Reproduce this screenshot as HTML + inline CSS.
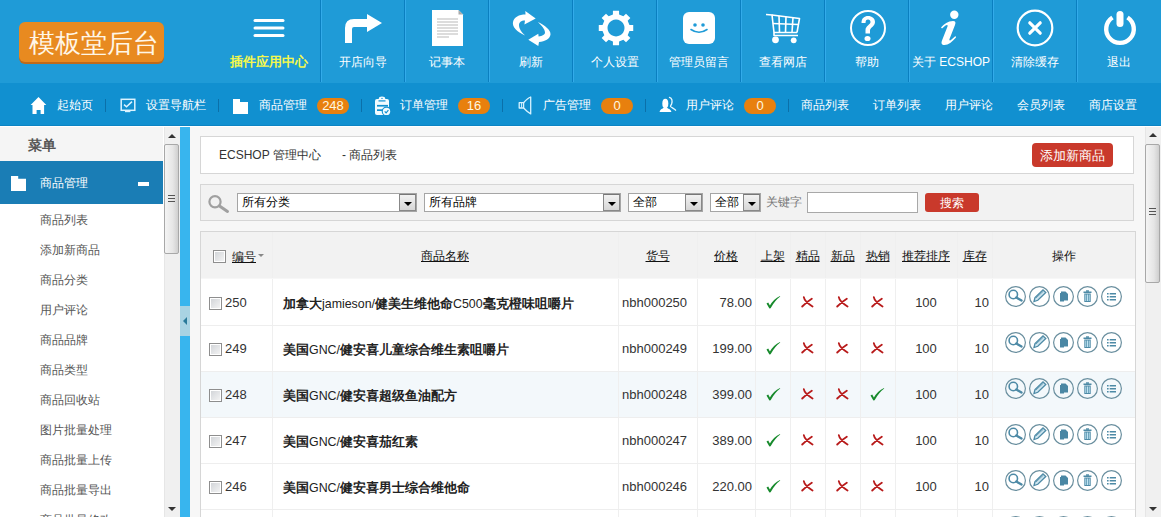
<!DOCTYPE html><html><head><meta charset="utf-8"><style>
*{margin:0;padding:0;box-sizing:border-box}
html,body{width:1161px;height:517px;overflow:hidden;background:#f4f4f4;font-family:"Liberation Sans",sans-serif;font-size:12px;color:#333}
.a{position:absolute}
#hd{position:absolute;left:0;top:0;width:1161px;height:83px;background:#1f9bd7}
#logo{position:absolute;left:19px;top:22px;width:145px;height:40px;background:#e88a20;border-radius:6px;box-shadow:0 2px 0 #bf6a1a;color:#fff6e6;font-size:26.5px;line-height:40px;text-align:center}
.hs{position:absolute;top:0;width:1px;height:82px;background:#0a7fc0}
.hl{position:absolute;top:0;width:1px;height:82px;background:#33abea}
.ht{position:absolute;top:53px;width:84px;text-align:center;color:#fff;font-size:12px;line-height:18px;white-space:nowrap}
#nav{position:absolute;left:0;top:83px;width:1161px;height:43px;background:#1190d0;border-bottom:1px solid #0c84c4}
.n{position:absolute;top:13px;color:#fff;font-size:12px;line-height:18px;white-space:nowrap}
.ns{position:absolute;top:16px;width:1px;height:13px;background:#0b70a9}
.bd{position:absolute;top:15px;width:32px;height:16px;border-radius:8px;background:#e8800e;color:#fff8e0;font-size:13px;line-height:16px;text-align:center}
.side-it{position:absolute;left:40px;color:#555;font-size:12px;line-height:16px;white-space:nowrap}
.th{position:absolute;top:0;height:47px;line-height:49px;text-align:center;color:#111;font-size:12px;font-weight:500;white-space:nowrap}
.th u{text-decoration:underline}
.td{position:absolute;white-space:nowrap;font-size:12px;color:#333}
.cv{position:absolute;top:0;width:1px;background:#efefef}
.rl{position:absolute;left:201px;width:934px;height:1px;background:#eeeeee}
.cb{position:absolute;width:13px;height:13px;border:1px solid #8e8e8e;box-shadow:inset 0 0 0 1px #fff;background:linear-gradient(135deg,#cfd2d6,#f6f6f6)}
.ic{position:absolute;width:21px;height:21px}
.sel{position:absolute;top:193px;height:19px;border:1px solid #a5a5a5;background:#fff;color:#000;font-size:12px;line-height:17px;padding-left:4px;white-space:nowrap}
.sel i{position:absolute;right:0;top:0;width:17px;height:17px;border:1px solid #888;border-top-color:#777;background:linear-gradient(#f2f2f2,#d6d6d6)}
.sel i:after{content:"";position:absolute;left:4px;top:7px;border-left:4px solid transparent;border-right:4px solid transparent;border-top:4px solid #000}
</style></head><body>
<div id="hd">
<div id="logo"></div><div class="a" style="left:21px;top:23px;width:145px;height:40px;color:#fff6e6;font-size:26.3px;font-weight:300;line-height:40px;text-align:center">模板堂后台</div>
<svg class="a" style="left:252px;top:17px" width="34" height="22"><g stroke="#fff" stroke-width="3" stroke-linecap="round"><line x1="3" y1="3.5" x2="31" y2="3.5"/><line x1="3" y1="11" x2="31" y2="11"/><line x1="3" y1="18.5" x2="31" y2="18.5"/></g></svg>
<div class="a" style="left:230px;top:53px;width:80px;color:#f4f84c;font-weight:bold;font-size:13px;line-height:18px;white-space:nowrap">插件应用中心</div>
<div class="hs" style="left:320px"></div><div class="hl" style="left:321px"></div>
<div class="ht" style="left:321px">开店向导</div>
<div class="hs" style="left:404px"></div><div class="hl" style="left:405px"></div>
<div class="ht" style="left:405px">记事本</div>
<div class="hs" style="left:488px"></div><div class="hl" style="left:489px"></div>
<div class="ht" style="left:489px">刷新</div>
<div class="hs" style="left:572px"></div><div class="hl" style="left:573px"></div>
<div class="ht" style="left:573px">个人设置</div>
<div class="hs" style="left:656px"></div><div class="hl" style="left:657px"></div>
<div class="ht" style="left:657px">管理员留言</div>
<div class="hs" style="left:740px"></div><div class="hl" style="left:741px"></div>
<div class="ht" style="left:741px">查看网店</div>
<div class="hs" style="left:824px"></div><div class="hl" style="left:825px"></div>
<div class="ht" style="left:825px">帮助</div>
<div class="hs" style="left:908px"></div><div class="hl" style="left:909px"></div>
<div class="ht" style="left:909px">关于 ECSHOP</div>
<div class="hs" style="left:992px"></div><div class="hl" style="left:993px"></div>
<div class="ht" style="left:993px">清除缓存</div>
<div class="hs" style="left:1076px"></div><div class="hl" style="left:1077px"></div>
<div class="ht" style="left:1077px">退出</div>
<svg class="a" style="left:340px;top:10px" width="48" height="38"><path d="M5 33 L5 18 Q5 9 14 9 L27 9 L27 4 L42 13 L27 22 L27 17 L14 17 Q12 17 12 19 L12 33 Z" fill="#fff"/></svg>
<svg class="a" style="left:432px;top:10px" width="32" height="36"><path d="M0 0 H26.5 L31 4.5 V36 H0 Z" fill="#fff"/><path d="M26.5 0 L31 4.5 H26.5 Z" fill="#a9a9a9"/><g fill="#dcdcdc"><rect x="5" y="8" width="21" height="2"/><rect x="5" y="11" width="21" height="2"/><rect x="5" y="14" width="21" height="2"/><rect x="5" y="17" width="21" height="2"/><rect x="5" y="20" width="21" height="2"/><rect x="5" y="23" width="21" height="2"/><rect x="5" y="26" width="12" height="2"/></g></svg>
<svg class="a" style="left:500px;top:5px" width="60" height="45"><g fill="#fff"><path d="M25 30.5 C17 27 12 22 13 17 C14 12 19 9.5 25.5 9.5 L25.3 6 L35.7 13.5 L24.4 19.6 L25 15.5 C21 15.5 19 17.5 19 20 C19 24 22 27.5 25 30.5 Z"/><path d="M37.9 17 C45 20.5 51 25 50.5 29.5 C50 34 45 36.5 39 37 L38.3 41 L28.3 34.8 L38.3 28.7 L38.6 31.5 C42.5 31 45 29.5 45 27.5 C45 24 41 20 37.9 17 Z"/></g></svg>
<svg class="a" style="left:598px;top:10px" width="36" height="36"><path d="M14.93 4.55 L14.92 0.77 L21.08 0.77 L21.07 4.55 L25.34 6.31 L28.00 3.64 L32.36 8.00 L29.69 10.66 L31.45 14.93 L35.23 14.92 L35.23 21.08 L31.45 21.07 L29.69 25.34 L32.36 28.00 L28.00 32.36 L25.34 29.69 L21.07 31.45 L21.08 35.23 L14.92 35.23 L14.93 31.45 L10.66 29.69 L8.00 32.36 L3.64 28.00 L6.31 25.34 L4.55 21.07 L0.77 21.08 L0.77 14.92 L4.55 14.93 L6.31 10.66 L3.64 8.00 L8.00 3.64 L10.66 6.31 Z M18 9.5 A8.5 8.5 0 1 0 18.01 9.5 Z" fill="#fff" fill-rule="evenodd"/><circle cx="18" cy="18" r="13.9" fill="none"/></svg>
<svg class="a" style="left:683px;top:12px" width="33" height="33"><rect x="0" y="0" width="32" height="32" rx="6" fill="#fff"/><circle cx="12" cy="13" r="1.8" fill="#1f9bd7"/><circle cx="20" cy="13" r="1.8" fill="#1f9bd7"/><path d="M8 17.5 Q16 23 24 17.5" stroke="#1f9bd7" stroke-width="1.6" fill="none" stroke-linecap="round"/></svg>
<svg class="a" style="left:764px;top:12px" width="38" height="34"><g stroke="#fff" stroke-width="1.6" fill="none" stroke-linejoin="round"><path d="M2 2.5 L8 3 L10 20.5 L33 20.5"/><path d="M8 3 L35.5 6.5 L33 20.5"/><line x1="8.8" y1="11.5" x2="34.2" y2="12.5"/><line x1="15" y1="3.8" x2="15.5" y2="20.5"/><line x1="22" y1="4.6" x2="21.5" y2="20.5"/><line x1="29" y1="5.5" x2="28" y2="20.5"/><path d="M10 20.5 L10 23.5 L34 23.5"/></g><circle cx="11.5" cy="27.8" r="3.4" fill="#fff"/><circle cx="29.7" cy="28.3" r="2.9" fill="#fff"/></svg>
<svg class="a" style="left:849px;top:9px" width="38" height="38"><circle cx="19" cy="19" r="17" stroke="#fff" stroke-width="2" fill="none"/><path d="M12.5 14 C12.5 9 15.5 7 19 7 C23 7 26 9.5 26 13 C26 17 22 18 21 21 L21 24.5 L16.5 24.5 L16.5 21 C16.5 17 21.5 15.5 21.5 13 C21.5 11.5 20.5 10.5 19 10.5 C17.5 10.5 16.5 11.5 16.5 14 Z" fill="#fff"/><ellipse cx="18.5" cy="29.5" rx="3" ry="2.6" fill="#fff"/></svg>
<svg class="a" style="left:938px;top:9px" width="24" height="38"><circle cx="16.3" cy="5.7" r="4.2" fill="#fff"/><path d="M3 18.5 C6 15 10 12 15 12 C17.5 12 18 13.5 17 16 L11.5 30 C11 31.5 12 32 13.5 30.5 L17.5 27 L18 28.5 C14 33 10.5 36 6.5 36 C3.5 36 3 34 4 31.5 L9.5 17.5 C10 16 9 15.5 7.5 16.5 L4 19.5 Z" fill="#fff"/></svg>
<svg class="a" style="left:1016px;top:9px" width="38" height="38"><circle cx="19" cy="19" r="17.3" stroke="#fff" stroke-width="2.2" fill="none"/><path d="M13.8 13.8 L24.2 24.2 M24.2 13.8 L13.8 24.2" stroke="#fff" stroke-width="3.2" stroke-linecap="round"/></svg>
<svg class="a" style="left:1102px;top:10px" width="36" height="37"><path d="M10.5 7.5 A13.8 13.8 0 1 0 25.5 7.5" stroke="#fff" stroke-width="4.4" fill="none"/><line x1="18" y1="4.5" x2="18" y2="13.5" stroke="#fff" stroke-width="7" stroke-linecap="round"/></svg>
</div>
<div id="nav">
<svg class="a" style="left:30px;top:13px" width="18" height="19"><path d="M8.5 0.9 L16.3 9 L14.1 9 L14.1 17.9 L10.6 17.9 L10.6 13.9 L6.6 13.9 L6.6 17.9 L2.5 17.9 L2.5 9 L0.6 9 Z" fill="#fff"/></svg>
<div class="n" style="left:57px">起始页</div>
<div class="ns" style="left:105px"></div>
<svg class="a" style="left:120px;top:15px" width="16" height="15"><rect x="1.2" y="1.3" width="13.6" height="11" fill="none" stroke="#dcf3ff" stroke-width="1.5"/><path d="M4 6.6 L6.5 8.8 L12 3.6" stroke="#dcf3ff" stroke-width="1.5" fill="none"/><rect x="5" y="12.6" width="5.4" height="1.6" fill="#dcf3ff"/></svg>
<div class="n" style="left:146px">设置导航栏</div>
<div class="ns" style="left:218px"></div>
<svg class="a" style="left:232px;top:15px" width="17" height="17"><path d="M1 1 H8 V4 H16 V16 H1 Z" fill="#fff"/></svg>
<div class="n" style="left:259px">商品管理</div>
<div class="bd" style="left:317px">248</div>
<div class="ns" style="left:361px"></div>
<svg class="a" style="left:370px;top:11px" width="24" height="24"><rect x="5" y="5" width="14" height="16" rx="2" fill="#f2fbff"/><ellipse cx="12" cy="4.6" rx="3.2" ry="2" fill="#f2fbff"/><circle cx="12" cy="4.4" r="0.7" fill="#1190d0"/><rect x="8.5" y="6.3" width="7" height="1.2" fill="#1190d0"/><rect x="7" y="10.9" width="11" height="1.7" fill="#1190d0"/><rect x="7" y="15.3" width="6" height="1.7" fill="#1190d0"/><circle cx="16.5" cy="17.4" r="4.8" fill="#1190d0"/><circle cx="16.5" cy="17.4" r="3.7" fill="#f2fbff"/><path d="M14.7 17.4 L16.1 18.8 L18.4 16.2" stroke="#1190d0" stroke-width="1.2" fill="none"/></svg>
<div class="n" style="left:400px">订单管理</div>
<div class="bd" style="left:458px">16</div>
<div class="ns" style="left:502px"></div>
<svg class="a" style="left:512px;top:9px" width="28" height="28"><g stroke="#d6f2ff" stroke-width="1.3" fill="none" stroke-linejoin="round"><path d="M7.2 10.7 H11.6 V16 H7.2 Z"/><path d="M9.6 11 V15.7" stroke-width="1"/><path d="M11.6 10.7 C14 8 16 6 18.7 5 V21.9 C16 20.5 14 18.5 11.6 16"/></g></svg>
<div class="n" style="left:543px">广告管理</div>
<div class="bd" style="left:601px">0</div>
<div class="ns" style="left:645px"></div>
<svg class="a" style="left:654px;top:9px" width="28" height="28"><ellipse cx="11.3" cy="11.6" rx="3" ry="4.8" fill="#fff"/><path d="M5.6 19.9 C6 17 9 16.8 10 15.2 L12.6 15.2 C13.6 16.8 17 17 17.4 19.9 Z" fill="#fff"/><path d="M15.5 5.4 C18 6 18.6 9 17.6 12 C17 13.5 16 14 16.6 14.6 C17.6 15.6 20.5 16.6 21.6 18.2" stroke="#e6f8ff" stroke-width="1.3" fill="none" stroke-linecap="round"/></svg>
<div class="n" style="left:686px">用户评论</div>
<div class="bd" style="left:744px">0</div>
<div class="ns" style="left:788px"></div>
<div class="n" style="left:801px">商品列表</div>
<div class="n" style="left:873px">订单列表</div>
<div class="n" style="left:945px">用户评论</div>
<div class="n" style="left:1017px">会员列表</div>
<div class="n" style="left:1089px">商店设置</div>
</div>
<div class="a" style="left:0;top:126px;width:1161px;height:1px;background:#fff"></div>
<div class="a" style="left:0;top:127px;width:164px;height:390px;background:#fff"></div>
<div class="a" style="left:0;top:127px;width:163px;height:34px;background:#f5f5f5;color:#555;font-weight:bold;font-size:14px;line-height:36px;padding-left:28px">菜单</div>
<div class="a" style="left:0;top:161px;width:163px;height:43px;background:#1a7db5"></div>
<svg class="a" style="left:10px;top:176px" width="17" height="16"><path d="M1 0 H8.2 V2.8 H16 V15 H1 Z" fill="#fff"/></svg>
<div class="a" style="left:40px;top:174px;color:#fff;font-size:12px;line-height:18px;white-space:nowrap">商品管理</div>
<div class="a" style="left:138px;top:182px;width:11px;height:4px;background:#fff"></div>
<div class="side-it" style="top:212px">商品列表</div>
<div class="side-it" style="top:242px">添加新商品</div>
<div class="side-it" style="top:272px">商品分类</div>
<div class="side-it" style="top:302px">用户评论</div>
<div class="side-it" style="top:332px">商品品牌</div>
<div class="side-it" style="top:362px">商品类型</div>
<div class="side-it" style="top:392px">商品回收站</div>
<div class="side-it" style="top:422px">图片批量处理</div>
<div class="side-it" style="top:452px">商品批量上传</div>
<div class="side-it" style="top:482px">商品批量导出</div>
<div class="side-it" style="top:512px">商品批量修改</div>
<div class="a" style="left:164px;top:127px;width:16px;height:390px;background:#f0f0f0;border-left:1px solid #e6e6e6"></div>
<div class="a" style="left:168px;top:134px;width:0;height:0;border-left:4px solid transparent;border-right:4px solid transparent;border-bottom:4px solid #333"></div>
<div class="a" style="left:164px;top:144px;width:15px;height:110px;border:1px solid #a8a8a8;border-radius:2px;background:linear-gradient(90deg,#f4f4f4,#e6e6e6 60%,#cfcfcf)"></div>
<div class="a" style="left:168px;top:195px;width:7px;height:7px;background:repeating-linear-gradient(#555 0 1px,transparent 1px 3px)"></div>
<div class="a" style="left:168px;top:507px;width:0;height:0;border-left:4px solid transparent;border-right:4px solid transparent;border-top:4px solid #333"></div>
<div class="a" style="left:180px;top:127px;width:10px;height:390px;background:#38b5ee"></div>
<div class="a" style="left:180px;top:306px;width:10px;height:30px;background:#a9d3e3"></div>
<div class="a" style="left:183px;top:317px;width:0;height:0;border-top:4px solid transparent;border-bottom:4px solid transparent;border-right:4px solid #2a7a9a"></div>
<div class="a" style="left:190px;top:127px;width:955px;height:390px;background:#f7f7f7"></div>
<div class="a" style="left:200px;top:136px;width:934px;height:38px;background:#fff;border:1px solid #d6d6d6"></div>
<div class="td" style="left:219px;top:147px;color:#333;line-height:16px">ECSHOP 管理中心</div>
<div class="td" style="left:342px;top:147px;color:#333;line-height:16px">- 商品列表</div>
<div class="a" style="left:1032px;top:143px;width:81px;height:24px;background:#c9392b;border-radius:4px;color:#fff;font-size:13px;line-height:26px;text-align:center;white-space:nowrap">添加新商品</div>
<div class="a" style="left:200px;top:184px;width:934px;height:37px;background:#f2f2f2;border:1px solid #d6d6d6"></div>
<svg class="a" style="left:207px;top:194px" width="24" height="20"><circle cx="8" cy="7.8" r="5.6" stroke="#a0a0a0" stroke-width="2.2" fill="none"/><line x1="12.5" y1="12" x2="20.5" y2="17.5" stroke="#a0a0a0" stroke-width="3" stroke-linecap="round"/></svg>
<div class="sel" style="left:237px;width:180px">所有分类<i></i></div>
<div class="sel" style="left:424px;width:197px">所有品牌<i></i></div>
<div class="sel" style="left:628px;width:75px">全部<i></i></div>
<div class="sel" style="left:710px;width:51px">全部<i></i></div>
<div class="td" style="left:766px;top:194px;color:#777;line-height:16px">关键字</div>
<div class="a" style="left:807px;top:192px;width:111px;height:21px;background:#fff;border:1px solid #a8a8a8"></div>
<div class="a" style="left:925px;top:193px;width:54px;height:19px;background:#c9392b;border-radius:3px;color:#fff;font-size:12px;line-height:21px;text-align:center">搜索</div>
<div class="a" style="left:200px;top:231px;width:936px;height:300px;background:#fff;border:1px solid #d6d6d6"></div>
<div class="a" style="left:201px;top:232px;width:934px;height:46px;background:#f2f2f2"></div>
<div class="a" style="left:201px;top:372px;width:934px;height:45px;background:#f3f8fb"></div>
<div class="cv" style="left:272px;top:232px;height:300px"></div>
<div class="cv" style="left:618px;top:232px;height:300px"></div>
<div class="cv" style="left:697px;top:232px;height:300px"></div>
<div class="cv" style="left:755px;top:232px;height:300px"></div>
<div class="cv" style="left:790px;top:232px;height:300px"></div>
<div class="cv" style="left:825px;top:232px;height:300px"></div>
<div class="cv" style="left:860px;top:232px;height:300px"></div>
<div class="cv" style="left:895px;top:232px;height:300px"></div>
<div class="cv" style="left:957px;top:232px;height:300px"></div>
<div class="cv" style="left:992px;top:232px;height:300px"></div>
<div class="rl" style="top:325px"></div>
<div class="rl" style="top:371px"></div>
<div class="rl" style="top:417px"></div>
<div class="rl" style="top:463px"></div>
<div class="rl" style="top:509px"></div>
<div class="rl" style="top:555px"></div>
<div class="rl" style="top:278px;background:#f7f7f7"></div>
<div class="cb" style="left:213px;top:250px"></div>
<div class="a" style="left:232px;top:249px;color:#111;font-size:12px;font-weight:500;line-height:16px"><u>编号</u></div>
<div class="a" style="left:258px;top:254px;width:0;height:0;border-left:3px solid transparent;border-right:3px solid transparent;border-top:3px solid #888"></div>
<div class="th" style="left:272px;width:346px;top:232px"><u>商品名称</u></div>
<div class="th" style="left:618px;width:79px;top:232px"><u>货号</u></div>
<div class="th" style="left:697px;width:58px;top:232px"><u>价格</u></div>
<div class="th" style="left:755px;width:35px;top:232px"><u>上架</u></div>
<div class="th" style="left:790px;width:35px;top:232px"><u>精品</u></div>
<div class="th" style="left:825px;width:35px;top:232px"><u>新品</u></div>
<div class="th" style="left:860px;width:35px;top:232px"><u>热销</u></div>
<div class="th" style="left:895px;width:62px;top:232px"><u>推荐排序</u></div>
<div class="th" style="left:957px;width:35px;top:232px"><u>库存</u></div>
<div class="th" style="left:992px;width:143px;top:232px">操作</div>
<div class="cb" style="left:209px;top:297px"></div>
<div class="td" style="left:225px;top:294px;line-height:17px;font-size:13px">250</div>
<div class="td" style="left:283px;top:296px;line-height:16px;font-weight:bold;font-size:13px;color:#222">加拿大<span style="font-weight:normal;font-size:12.4px;position:relative;top:-0.5px">jamieson/</span>健美生维他命<span style="font-weight:normal;font-size:12.4px;position:relative;top:-0.5px">C500</span>毫克橙味咀嚼片</div>
<div class="td" style="left:622px;top:294px;line-height:17px;font-size:13px">nbh000250</div>
<div class="td" style="left:697px;width:55px;text-align:right;top:294px;line-height:17px;font-size:13px">78.00</div>
<div class="a" style="left:766px;top:295px;width:15px;height:14px"><svg width="15" height="14"><path d="M0.5 8.5 L2.2 7.6 L3.9 10.6 Q7.5 4 14 1 L14.2 1.6 Q9 5.5 4.6 13.2 L3.4 13.6 Z" fill="#178a2c"/></svg></div>
<div class="a" style="left:801px;top:296px;width:13px;height:12px"><svg width="13" height="12"><path d="M2.8 1.2 Q3.5 5.5 11.5 10.5 M10.8 2.8 Q6 5.8 1.2 10.5" stroke="#b81a1a" stroke-width="1.8" fill="none" stroke-linecap="round"/></svg></div>
<div class="a" style="left:836px;top:296px;width:13px;height:12px"><svg width="13" height="12"><path d="M2.8 1.2 Q3.5 5.5 11.5 10.5 M10.8 2.8 Q6 5.8 1.2 10.5" stroke="#b81a1a" stroke-width="1.8" fill="none" stroke-linecap="round"/></svg></div>
<div class="a" style="left:871px;top:296px;width:13px;height:12px"><svg width="13" height="12"><path d="M2.8 1.2 Q3.5 5.5 11.5 10.5 M10.8 2.8 Q6 5.8 1.2 10.5" stroke="#b81a1a" stroke-width="1.8" fill="none" stroke-linecap="round"/></svg></div>
<div class="td" style="left:895px;width:62px;text-align:center;top:294px;line-height:17px;font-size:13px">100</div>
<div class="td" style="left:957px;width:32px;text-align:right;top:294px;line-height:17px;font-size:13px">10</div>
<svg class="a" style="left:1005px;top:286px" width="22" height="22"><circle cx="10.5" cy="10.5" r="9.9" stroke="#6a8f9f" stroke-width="1.2" fill="none"/><circle cx="8.3" cy="8.5" r="4.2" stroke="#4d8aa6" stroke-width="1.6" fill="none"/><line x1="11.3" y1="11.5" x2="16.5" y2="14.5" stroke="#4d8aa6" stroke-width="2.4" stroke-linecap="round"/></svg>
<svg class="a" style="left:1029px;top:286px" width="22" height="22"><circle cx="10.5" cy="10.5" r="9.9" stroke="#6a8f9f" stroke-width="1.2" fill="none"/><path d="M5 15.5 L6 11.5 L14 3.8 L16.8 6.5 L8.8 14.3 Z" fill="#cfe6f0" stroke="#4d8aa6" stroke-width="1.3"/><line x1="7" y1="12" x2="14.5" y2="5" stroke="#4d8aa6" stroke-width="0.8"/></svg>
<svg class="a" style="left:1053px;top:286px" width="22" height="22"><circle cx="10.5" cy="10.5" r="9.9" stroke="#6a8f9f" stroke-width="1.2" fill="none"/><path d="M8 5.5 H12.5 L15 8 V14.5 H8 Z" fill="#4a87a4"/><path d="M7 7 H11 V15.5 H7 Z" fill="#4a87a4"/></svg>
<svg class="a" style="left:1077px;top:286px" width="22" height="22"><circle cx="10.5" cy="10.5" r="9.9" stroke="#6a8f9f" stroke-width="1.2" fill="none"/><rect x="6.5" y="5.5" width="8" height="1.5" fill="#4d8aa6"/><rect x="9" y="4.3" width="3" height="1.5" fill="#4d8aa6"/><path d="M7.3 7.5 H13.7 V16 H7.3 Z" fill="#4d8aa6"/><g fill="#bfe3f2"><rect x="8.3" y="8.5" width="1" height="6.5"/><rect x="10" y="8.5" width="1" height="6.5"/><rect x="11.7" y="8.5" width="1" height="6.5"/></g></svg>
<svg class="a" style="left:1101px;top:286px" width="22" height="22"><circle cx="10.5" cy="10.5" r="9.9" stroke="#6a8f9f" stroke-width="1.2" fill="none"/><g fill="#4d8aa6"><rect x="6" y="7" width="1.6" height="1.5"/><rect x="6" y="10" width="1.6" height="1.5"/><rect x="6" y="13" width="1.6" height="1.5"/><rect x="8.7" y="7" width="6.3" height="1.5"/><rect x="8.7" y="10" width="6.3" height="1.5"/><rect x="8.7" y="13" width="6.3" height="1.5"/></g></svg>
<div class="cb" style="left:209px;top:343px"></div>
<div class="td" style="left:225px;top:340px;line-height:17px;font-size:13px">249</div>
<div class="td" style="left:283px;top:342px;line-height:16px;font-weight:bold;font-size:13px;color:#222">美国<span style="font-weight:normal;font-size:12.4px;position:relative;top:-0.5px">GNC/</span>健安喜儿童综合维生素咀嚼片</div>
<div class="td" style="left:622px;top:340px;line-height:17px;font-size:13px">nbh000249</div>
<div class="td" style="left:697px;width:55px;text-align:right;top:340px;line-height:17px;font-size:13px">199.00</div>
<div class="a" style="left:766px;top:341px;width:15px;height:14px"><svg width="15" height="14"><path d="M0.5 8.5 L2.2 7.6 L3.9 10.6 Q7.5 4 14 1 L14.2 1.6 Q9 5.5 4.6 13.2 L3.4 13.6 Z" fill="#178a2c"/></svg></div>
<div class="a" style="left:801px;top:342px;width:13px;height:12px"><svg width="13" height="12"><path d="M2.8 1.2 Q3.5 5.5 11.5 10.5 M10.8 2.8 Q6 5.8 1.2 10.5" stroke="#b81a1a" stroke-width="1.8" fill="none" stroke-linecap="round"/></svg></div>
<div class="a" style="left:836px;top:342px;width:13px;height:12px"><svg width="13" height="12"><path d="M2.8 1.2 Q3.5 5.5 11.5 10.5 M10.8 2.8 Q6 5.8 1.2 10.5" stroke="#b81a1a" stroke-width="1.8" fill="none" stroke-linecap="round"/></svg></div>
<div class="a" style="left:871px;top:342px;width:13px;height:12px"><svg width="13" height="12"><path d="M2.8 1.2 Q3.5 5.5 11.5 10.5 M10.8 2.8 Q6 5.8 1.2 10.5" stroke="#b81a1a" stroke-width="1.8" fill="none" stroke-linecap="round"/></svg></div>
<div class="td" style="left:895px;width:62px;text-align:center;top:340px;line-height:17px;font-size:13px">100</div>
<div class="td" style="left:957px;width:32px;text-align:right;top:340px;line-height:17px;font-size:13px">10</div>
<svg class="a" style="left:1005px;top:332px" width="22" height="22"><circle cx="10.5" cy="10.5" r="9.9" stroke="#6a8f9f" stroke-width="1.2" fill="none"/><circle cx="8.3" cy="8.5" r="4.2" stroke="#4d8aa6" stroke-width="1.6" fill="none"/><line x1="11.3" y1="11.5" x2="16.5" y2="14.5" stroke="#4d8aa6" stroke-width="2.4" stroke-linecap="round"/></svg>
<svg class="a" style="left:1029px;top:332px" width="22" height="22"><circle cx="10.5" cy="10.5" r="9.9" stroke="#6a8f9f" stroke-width="1.2" fill="none"/><path d="M5 15.5 L6 11.5 L14 3.8 L16.8 6.5 L8.8 14.3 Z" fill="#cfe6f0" stroke="#4d8aa6" stroke-width="1.3"/><line x1="7" y1="12" x2="14.5" y2="5" stroke="#4d8aa6" stroke-width="0.8"/></svg>
<svg class="a" style="left:1053px;top:332px" width="22" height="22"><circle cx="10.5" cy="10.5" r="9.9" stroke="#6a8f9f" stroke-width="1.2" fill="none"/><path d="M8 5.5 H12.5 L15 8 V14.5 H8 Z" fill="#4a87a4"/><path d="M7 7 H11 V15.5 H7 Z" fill="#4a87a4"/></svg>
<svg class="a" style="left:1077px;top:332px" width="22" height="22"><circle cx="10.5" cy="10.5" r="9.9" stroke="#6a8f9f" stroke-width="1.2" fill="none"/><rect x="6.5" y="5.5" width="8" height="1.5" fill="#4d8aa6"/><rect x="9" y="4.3" width="3" height="1.5" fill="#4d8aa6"/><path d="M7.3 7.5 H13.7 V16 H7.3 Z" fill="#4d8aa6"/><g fill="#bfe3f2"><rect x="8.3" y="8.5" width="1" height="6.5"/><rect x="10" y="8.5" width="1" height="6.5"/><rect x="11.7" y="8.5" width="1" height="6.5"/></g></svg>
<svg class="a" style="left:1101px;top:332px" width="22" height="22"><circle cx="10.5" cy="10.5" r="9.9" stroke="#6a8f9f" stroke-width="1.2" fill="none"/><g fill="#4d8aa6"><rect x="6" y="7" width="1.6" height="1.5"/><rect x="6" y="10" width="1.6" height="1.5"/><rect x="6" y="13" width="1.6" height="1.5"/><rect x="8.7" y="7" width="6.3" height="1.5"/><rect x="8.7" y="10" width="6.3" height="1.5"/><rect x="8.7" y="13" width="6.3" height="1.5"/></g></svg>
<div class="cb" style="left:209px;top:389px"></div>
<div class="td" style="left:225px;top:386px;line-height:17px;font-size:13px">248</div>
<div class="td" style="left:283px;top:388px;line-height:16px;font-weight:bold;font-size:13px;color:#222">美国<span style="font-weight:normal;font-size:12.4px;position:relative;top:-0.5px">GNC/</span>健安喜超级鱼油配方</div>
<div class="td" style="left:622px;top:386px;line-height:17px;font-size:13px">nbh000248</div>
<div class="td" style="left:697px;width:55px;text-align:right;top:386px;line-height:17px;font-size:13px">399.00</div>
<div class="a" style="left:766px;top:387px;width:15px;height:14px"><svg width="15" height="14"><path d="M0.5 8.5 L2.2 7.6 L3.9 10.6 Q7.5 4 14 1 L14.2 1.6 Q9 5.5 4.6 13.2 L3.4 13.6 Z" fill="#178a2c"/></svg></div>
<div class="a" style="left:801px;top:388px;width:13px;height:12px"><svg width="13" height="12"><path d="M2.8 1.2 Q3.5 5.5 11.5 10.5 M10.8 2.8 Q6 5.8 1.2 10.5" stroke="#b81a1a" stroke-width="1.8" fill="none" stroke-linecap="round"/></svg></div>
<div class="a" style="left:836px;top:388px;width:13px;height:12px"><svg width="13" height="12"><path d="M2.8 1.2 Q3.5 5.5 11.5 10.5 M10.8 2.8 Q6 5.8 1.2 10.5" stroke="#b81a1a" stroke-width="1.8" fill="none" stroke-linecap="round"/></svg></div>
<div class="a" style="left:870px;top:387px;width:15px;height:14px"><svg width="15" height="14"><path d="M0.5 8.5 L2.2 7.6 L3.9 10.6 Q7.5 4 14 1 L14.2 1.6 Q9 5.5 4.6 13.2 L3.4 13.6 Z" fill="#178a2c"/></svg></div>
<div class="td" style="left:895px;width:62px;text-align:center;top:386px;line-height:17px;font-size:13px">100</div>
<div class="td" style="left:957px;width:32px;text-align:right;top:386px;line-height:17px;font-size:13px">10</div>
<svg class="a" style="left:1005px;top:378px" width="22" height="22"><circle cx="10.5" cy="10.5" r="9.9" stroke="#6a8f9f" stroke-width="1.2" fill="none"/><circle cx="8.3" cy="8.5" r="4.2" stroke="#4d8aa6" stroke-width="1.6" fill="none"/><line x1="11.3" y1="11.5" x2="16.5" y2="14.5" stroke="#4d8aa6" stroke-width="2.4" stroke-linecap="round"/></svg>
<svg class="a" style="left:1029px;top:378px" width="22" height="22"><circle cx="10.5" cy="10.5" r="9.9" stroke="#6a8f9f" stroke-width="1.2" fill="none"/><path d="M5 15.5 L6 11.5 L14 3.8 L16.8 6.5 L8.8 14.3 Z" fill="#cfe6f0" stroke="#4d8aa6" stroke-width="1.3"/><line x1="7" y1="12" x2="14.5" y2="5" stroke="#4d8aa6" stroke-width="0.8"/></svg>
<svg class="a" style="left:1053px;top:378px" width="22" height="22"><circle cx="10.5" cy="10.5" r="9.9" stroke="#6a8f9f" stroke-width="1.2" fill="none"/><path d="M8 5.5 H12.5 L15 8 V14.5 H8 Z" fill="#4a87a4"/><path d="M7 7 H11 V15.5 H7 Z" fill="#4a87a4"/></svg>
<svg class="a" style="left:1077px;top:378px" width="22" height="22"><circle cx="10.5" cy="10.5" r="9.9" stroke="#6a8f9f" stroke-width="1.2" fill="none"/><rect x="6.5" y="5.5" width="8" height="1.5" fill="#4d8aa6"/><rect x="9" y="4.3" width="3" height="1.5" fill="#4d8aa6"/><path d="M7.3 7.5 H13.7 V16 H7.3 Z" fill="#4d8aa6"/><g fill="#bfe3f2"><rect x="8.3" y="8.5" width="1" height="6.5"/><rect x="10" y="8.5" width="1" height="6.5"/><rect x="11.7" y="8.5" width="1" height="6.5"/></g></svg>
<svg class="a" style="left:1101px;top:378px" width="22" height="22"><circle cx="10.5" cy="10.5" r="9.9" stroke="#6a8f9f" stroke-width="1.2" fill="none"/><g fill="#4d8aa6"><rect x="6" y="7" width="1.6" height="1.5"/><rect x="6" y="10" width="1.6" height="1.5"/><rect x="6" y="13" width="1.6" height="1.5"/><rect x="8.7" y="7" width="6.3" height="1.5"/><rect x="8.7" y="10" width="6.3" height="1.5"/><rect x="8.7" y="13" width="6.3" height="1.5"/></g></svg>
<div class="cb" style="left:209px;top:435px"></div>
<div class="td" style="left:225px;top:432px;line-height:17px;font-size:13px">247</div>
<div class="td" style="left:283px;top:434px;line-height:16px;font-weight:bold;font-size:13px;color:#222">美国<span style="font-weight:normal;font-size:12.4px;position:relative;top:-0.5px">GNC/</span>健安喜茄红素</div>
<div class="td" style="left:622px;top:432px;line-height:17px;font-size:13px">nbh000247</div>
<div class="td" style="left:697px;width:55px;text-align:right;top:432px;line-height:17px;font-size:13px">389.00</div>
<div class="a" style="left:766px;top:433px;width:15px;height:14px"><svg width="15" height="14"><path d="M0.5 8.5 L2.2 7.6 L3.9 10.6 Q7.5 4 14 1 L14.2 1.6 Q9 5.5 4.6 13.2 L3.4 13.6 Z" fill="#178a2c"/></svg></div>
<div class="a" style="left:801px;top:434px;width:13px;height:12px"><svg width="13" height="12"><path d="M2.8 1.2 Q3.5 5.5 11.5 10.5 M10.8 2.8 Q6 5.8 1.2 10.5" stroke="#b81a1a" stroke-width="1.8" fill="none" stroke-linecap="round"/></svg></div>
<div class="a" style="left:836px;top:434px;width:13px;height:12px"><svg width="13" height="12"><path d="M2.8 1.2 Q3.5 5.5 11.5 10.5 M10.8 2.8 Q6 5.8 1.2 10.5" stroke="#b81a1a" stroke-width="1.8" fill="none" stroke-linecap="round"/></svg></div>
<div class="a" style="left:871px;top:434px;width:13px;height:12px"><svg width="13" height="12"><path d="M2.8 1.2 Q3.5 5.5 11.5 10.5 M10.8 2.8 Q6 5.8 1.2 10.5" stroke="#b81a1a" stroke-width="1.8" fill="none" stroke-linecap="round"/></svg></div>
<div class="td" style="left:895px;width:62px;text-align:center;top:432px;line-height:17px;font-size:13px">100</div>
<div class="td" style="left:957px;width:32px;text-align:right;top:432px;line-height:17px;font-size:13px">10</div>
<svg class="a" style="left:1005px;top:424px" width="22" height="22"><circle cx="10.5" cy="10.5" r="9.9" stroke="#6a8f9f" stroke-width="1.2" fill="none"/><circle cx="8.3" cy="8.5" r="4.2" stroke="#4d8aa6" stroke-width="1.6" fill="none"/><line x1="11.3" y1="11.5" x2="16.5" y2="14.5" stroke="#4d8aa6" stroke-width="2.4" stroke-linecap="round"/></svg>
<svg class="a" style="left:1029px;top:424px" width="22" height="22"><circle cx="10.5" cy="10.5" r="9.9" stroke="#6a8f9f" stroke-width="1.2" fill="none"/><path d="M5 15.5 L6 11.5 L14 3.8 L16.8 6.5 L8.8 14.3 Z" fill="#cfe6f0" stroke="#4d8aa6" stroke-width="1.3"/><line x1="7" y1="12" x2="14.5" y2="5" stroke="#4d8aa6" stroke-width="0.8"/></svg>
<svg class="a" style="left:1053px;top:424px" width="22" height="22"><circle cx="10.5" cy="10.5" r="9.9" stroke="#6a8f9f" stroke-width="1.2" fill="none"/><path d="M8 5.5 H12.5 L15 8 V14.5 H8 Z" fill="#4a87a4"/><path d="M7 7 H11 V15.5 H7 Z" fill="#4a87a4"/></svg>
<svg class="a" style="left:1077px;top:424px" width="22" height="22"><circle cx="10.5" cy="10.5" r="9.9" stroke="#6a8f9f" stroke-width="1.2" fill="none"/><rect x="6.5" y="5.5" width="8" height="1.5" fill="#4d8aa6"/><rect x="9" y="4.3" width="3" height="1.5" fill="#4d8aa6"/><path d="M7.3 7.5 H13.7 V16 H7.3 Z" fill="#4d8aa6"/><g fill="#bfe3f2"><rect x="8.3" y="8.5" width="1" height="6.5"/><rect x="10" y="8.5" width="1" height="6.5"/><rect x="11.7" y="8.5" width="1" height="6.5"/></g></svg>
<svg class="a" style="left:1101px;top:424px" width="22" height="22"><circle cx="10.5" cy="10.5" r="9.9" stroke="#6a8f9f" stroke-width="1.2" fill="none"/><g fill="#4d8aa6"><rect x="6" y="7" width="1.6" height="1.5"/><rect x="6" y="10" width="1.6" height="1.5"/><rect x="6" y="13" width="1.6" height="1.5"/><rect x="8.7" y="7" width="6.3" height="1.5"/><rect x="8.7" y="10" width="6.3" height="1.5"/><rect x="8.7" y="13" width="6.3" height="1.5"/></g></svg>
<div class="cb" style="left:209px;top:481px"></div>
<div class="td" style="left:225px;top:478px;line-height:17px;font-size:13px">246</div>
<div class="td" style="left:283px;top:480px;line-height:16px;font-weight:bold;font-size:13px;color:#222">美国<span style="font-weight:normal;font-size:12.4px;position:relative;top:-0.5px">GNC/</span>健安喜男士综合维他命</div>
<div class="td" style="left:622px;top:478px;line-height:17px;font-size:13px">nbh000246</div>
<div class="td" style="left:697px;width:55px;text-align:right;top:478px;line-height:17px;font-size:13px">220.00</div>
<div class="a" style="left:766px;top:479px;width:15px;height:14px"><svg width="15" height="14"><path d="M0.5 8.5 L2.2 7.6 L3.9 10.6 Q7.5 4 14 1 L14.2 1.6 Q9 5.5 4.6 13.2 L3.4 13.6 Z" fill="#178a2c"/></svg></div>
<div class="a" style="left:801px;top:480px;width:13px;height:12px"><svg width="13" height="12"><path d="M2.8 1.2 Q3.5 5.5 11.5 10.5 M10.8 2.8 Q6 5.8 1.2 10.5" stroke="#b81a1a" stroke-width="1.8" fill="none" stroke-linecap="round"/></svg></div>
<div class="a" style="left:836px;top:480px;width:13px;height:12px"><svg width="13" height="12"><path d="M2.8 1.2 Q3.5 5.5 11.5 10.5 M10.8 2.8 Q6 5.8 1.2 10.5" stroke="#b81a1a" stroke-width="1.8" fill="none" stroke-linecap="round"/></svg></div>
<div class="a" style="left:871px;top:480px;width:13px;height:12px"><svg width="13" height="12"><path d="M2.8 1.2 Q3.5 5.5 11.5 10.5 M10.8 2.8 Q6 5.8 1.2 10.5" stroke="#b81a1a" stroke-width="1.8" fill="none" stroke-linecap="round"/></svg></div>
<div class="td" style="left:895px;width:62px;text-align:center;top:478px;line-height:17px;font-size:13px">100</div>
<div class="td" style="left:957px;width:32px;text-align:right;top:478px;line-height:17px;font-size:13px">10</div>
<svg class="a" style="left:1005px;top:470px" width="22" height="22"><circle cx="10.5" cy="10.5" r="9.9" stroke="#6a8f9f" stroke-width="1.2" fill="none"/><circle cx="8.3" cy="8.5" r="4.2" stroke="#4d8aa6" stroke-width="1.6" fill="none"/><line x1="11.3" y1="11.5" x2="16.5" y2="14.5" stroke="#4d8aa6" stroke-width="2.4" stroke-linecap="round"/></svg>
<svg class="a" style="left:1029px;top:470px" width="22" height="22"><circle cx="10.5" cy="10.5" r="9.9" stroke="#6a8f9f" stroke-width="1.2" fill="none"/><path d="M5 15.5 L6 11.5 L14 3.8 L16.8 6.5 L8.8 14.3 Z" fill="#cfe6f0" stroke="#4d8aa6" stroke-width="1.3"/><line x1="7" y1="12" x2="14.5" y2="5" stroke="#4d8aa6" stroke-width="0.8"/></svg>
<svg class="a" style="left:1053px;top:470px" width="22" height="22"><circle cx="10.5" cy="10.5" r="9.9" stroke="#6a8f9f" stroke-width="1.2" fill="none"/><path d="M8 5.5 H12.5 L15 8 V14.5 H8 Z" fill="#4a87a4"/><path d="M7 7 H11 V15.5 H7 Z" fill="#4a87a4"/></svg>
<svg class="a" style="left:1077px;top:470px" width="22" height="22"><circle cx="10.5" cy="10.5" r="9.9" stroke="#6a8f9f" stroke-width="1.2" fill="none"/><rect x="6.5" y="5.5" width="8" height="1.5" fill="#4d8aa6"/><rect x="9" y="4.3" width="3" height="1.5" fill="#4d8aa6"/><path d="M7.3 7.5 H13.7 V16 H7.3 Z" fill="#4d8aa6"/><g fill="#bfe3f2"><rect x="8.3" y="8.5" width="1" height="6.5"/><rect x="10" y="8.5" width="1" height="6.5"/><rect x="11.7" y="8.5" width="1" height="6.5"/></g></svg>
<svg class="a" style="left:1101px;top:470px" width="22" height="22"><circle cx="10.5" cy="10.5" r="9.9" stroke="#6a8f9f" stroke-width="1.2" fill="none"/><g fill="#4d8aa6"><rect x="6" y="7" width="1.6" height="1.5"/><rect x="6" y="10" width="1.6" height="1.5"/><rect x="6" y="13" width="1.6" height="1.5"/><rect x="8.7" y="7" width="6.3" height="1.5"/><rect x="8.7" y="10" width="6.3" height="1.5"/><rect x="8.7" y="13" width="6.3" height="1.5"/></g></svg>
<div class="cb" style="left:209px;top:527px"></div>
<div class="td" style="left:225px;top:524px;line-height:17px;font-size:13px">245</div>
<div class="td" style="left:283px;top:526px;line-height:16px;font-weight:bold;font-size:13px;color:#222">美国<span style="font-weight:normal;font-size:12.4px;position:relative;top:-0.5px">GNC/</span>健安喜女士综合维他命</div>
<div class="td" style="left:622px;top:524px;line-height:17px;font-size:13px">nbh000245</div>
<div class="td" style="left:697px;width:55px;text-align:right;top:524px;line-height:17px;font-size:13px">220.00</div>
<div class="a" style="left:766px;top:525px;width:15px;height:14px"><svg width="15" height="14"><path d="M0.5 8.5 L2.2 7.6 L3.9 10.6 Q7.5 4 14 1 L14.2 1.6 Q9 5.5 4.6 13.2 L3.4 13.6 Z" fill="#178a2c"/></svg></div>
<div class="a" style="left:801px;top:526px;width:13px;height:12px"><svg width="13" height="12"><path d="M2.8 1.2 Q3.5 5.5 11.5 10.5 M10.8 2.8 Q6 5.8 1.2 10.5" stroke="#b81a1a" stroke-width="1.8" fill="none" stroke-linecap="round"/></svg></div>
<div class="a" style="left:836px;top:526px;width:13px;height:12px"><svg width="13" height="12"><path d="M2.8 1.2 Q3.5 5.5 11.5 10.5 M10.8 2.8 Q6 5.8 1.2 10.5" stroke="#b81a1a" stroke-width="1.8" fill="none" stroke-linecap="round"/></svg></div>
<div class="a" style="left:871px;top:526px;width:13px;height:12px"><svg width="13" height="12"><path d="M2.8 1.2 Q3.5 5.5 11.5 10.5 M10.8 2.8 Q6 5.8 1.2 10.5" stroke="#b81a1a" stroke-width="1.8" fill="none" stroke-linecap="round"/></svg></div>
<div class="td" style="left:895px;width:62px;text-align:center;top:524px;line-height:17px;font-size:13px">100</div>
<div class="td" style="left:957px;width:32px;text-align:right;top:524px;line-height:17px;font-size:13px">10</div>
<svg class="a" style="left:1005px;top:516px" width="22" height="22"><circle cx="10.5" cy="10.5" r="9.9" stroke="#6a8f9f" stroke-width="1.2" fill="none"/><circle cx="8.3" cy="8.5" r="4.2" stroke="#4d8aa6" stroke-width="1.6" fill="none"/><line x1="11.3" y1="11.5" x2="16.5" y2="14.5" stroke="#4d8aa6" stroke-width="2.4" stroke-linecap="round"/></svg>
<svg class="a" style="left:1029px;top:516px" width="22" height="22"><circle cx="10.5" cy="10.5" r="9.9" stroke="#6a8f9f" stroke-width="1.2" fill="none"/><path d="M5 15.5 L6 11.5 L14 3.8 L16.8 6.5 L8.8 14.3 Z" fill="#cfe6f0" stroke="#4d8aa6" stroke-width="1.3"/><line x1="7" y1="12" x2="14.5" y2="5" stroke="#4d8aa6" stroke-width="0.8"/></svg>
<svg class="a" style="left:1053px;top:516px" width="22" height="22"><circle cx="10.5" cy="10.5" r="9.9" stroke="#6a8f9f" stroke-width="1.2" fill="none"/><path d="M8 5.5 H12.5 L15 8 V14.5 H8 Z" fill="#4a87a4"/><path d="M7 7 H11 V15.5 H7 Z" fill="#4a87a4"/></svg>
<svg class="a" style="left:1077px;top:516px" width="22" height="22"><circle cx="10.5" cy="10.5" r="9.9" stroke="#6a8f9f" stroke-width="1.2" fill="none"/><rect x="6.5" y="5.5" width="8" height="1.5" fill="#4d8aa6"/><rect x="9" y="4.3" width="3" height="1.5" fill="#4d8aa6"/><path d="M7.3 7.5 H13.7 V16 H7.3 Z" fill="#4d8aa6"/><g fill="#bfe3f2"><rect x="8.3" y="8.5" width="1" height="6.5"/><rect x="10" y="8.5" width="1" height="6.5"/><rect x="11.7" y="8.5" width="1" height="6.5"/></g></svg>
<svg class="a" style="left:1101px;top:516px" width="22" height="22"><circle cx="10.5" cy="10.5" r="9.9" stroke="#6a8f9f" stroke-width="1.2" fill="none"/><g fill="#4d8aa6"><rect x="6" y="7" width="1.6" height="1.5"/><rect x="6" y="10" width="1.6" height="1.5"/><rect x="6" y="13" width="1.6" height="1.5"/><rect x="8.7" y="7" width="6.3" height="1.5"/><rect x="8.7" y="10" width="6.3" height="1.5"/><rect x="8.7" y="13" width="6.3" height="1.5"/></g></svg>
<div class="a" style="left:1145px;top:127px;width:16px;height:390px;background:#f0f0f0;border-left:1px solid #e6e6e6"></div>
<div class="a" style="left:1149px;top:133px;width:0;height:0;border-left:4px solid transparent;border-right:4px solid transparent;border-bottom:4px solid #333"></div>
<div class="a" style="left:1145px;top:144px;width:15px;height:139px;border:1px solid #a8a8a8;border-radius:2px;background:linear-gradient(90deg,#f4f4f4,#e6e6e6 60%,#cfcfcf)"></div>
<div class="a" style="left:1149px;top:208px;width:7px;height:7px;background:repeating-linear-gradient(#555 0 1px,transparent 1px 3px)"></div>
<div class="a" style="left:1149px;top:507px;width:0;height:0;border-left:4px solid transparent;border-right:4px solid transparent;border-top:4px solid #333"></div>
</body></html>
